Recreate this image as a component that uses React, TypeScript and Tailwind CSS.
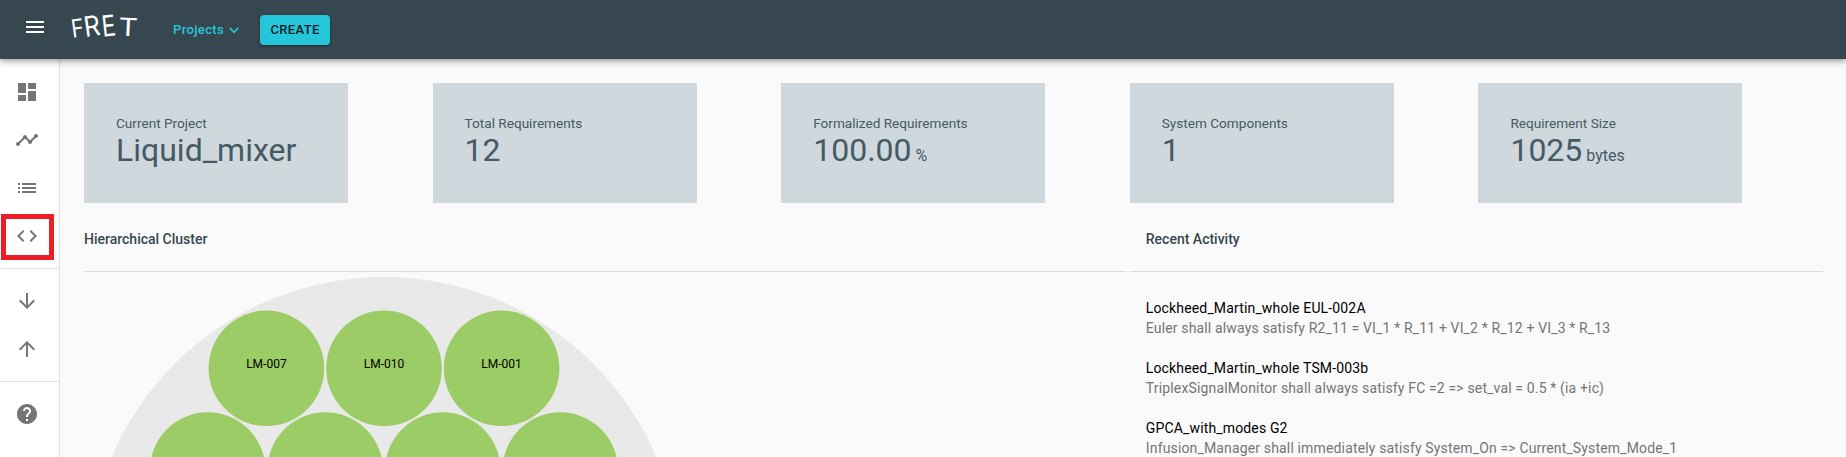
import type { ReactNode } from 'react';
import {
  MdCode,
  MdDashboard,
  MdHelp,
  MdList,
  MdMenu,
  MdOutlineArrowDownward,
  MdOutlineArrowUpward,
  MdTimeline,
} from 'react-icons/md';

const stats = [
  { label: 'Current Project', value: 'Liquid_mixer', unit: '' },
  { label: 'Total Requirements', value: '12', unit: '' },
  { label: 'Formalized Requirements', value: '100.00', unit: '%' },
  { label: 'System Components', value: '1', unit: '' },
  { label: 'Requirement Size', value: '1025', unit: 'bytes' },
];

const activity = [
  { title: 'Lockheed_Martin_whole EUL-002A', text: 'Euler shall always satisfy R2_11 = VI_1 * R_11 + VI_2 * R_12 + VI_3 * R_13' },
  { title: 'Lockheed_Martin_whole TSM-003b', text: 'TriplexSignalMonitor shall always satisfy FC =2 => set_val = 0.5 * (ia +ic)' },
  { title: 'GPCA_with_modes G2', text: 'Infusion_Manager shall immediately satisfy System_On => Current_System_Mode_1' },
];

const bubbles = [
  { x: 182.4, y: 96.3, label: 'LM-007' },
  { x: 300, y: 96.3, label: 'LM-010' },
  { x: 417.6, y: 96.3, label: 'LM-001' },
  { x: 123.7, y: 198.1, label: '' },
  { x: 241.2, y: 198.1, label: '' },
  { x: 358.8, y: 198.1, label: '' },
  { x: 476.3, y: 198.1, label: '' },
];

function NavItem({ children }: { children: ReactNode }) {
  return <a className="flex h-12 items-center pl-[15px] text-2xl text-[#757575]">{children}</a>;
}

function Logo() {
  return (
    <div className="mt-[13px] ml-[23px] flex h-[26px] w-[68px] font-['Inter',sans-serif] leading-[26px] text-white">
      <span className="mt-[2px] flex w-[14px] justify-center text-[25px]">
        <span className="inline-block scale-x-85 -rotate-8">F</span>
      </span>
      <span className="flex w-[17px] justify-center text-[28px]">
        <span className="inline-block scale-x-90 -rotate-8">R</span>
      </span>
      <span className="flex w-[16px] justify-center text-[29px]">
        <span className="inline-block scale-x-80 -rotate-6">E</span>
      </span>
      <span className="mt-px ml-px flex w-[20px] justify-center text-[25px]">
        <span className="inline-block scale-x-120 rotate-3">T</span>
      </span>
    </div>
  );
}

function Header() {
  return (
    <header className="relative z-10 flex h-[59px] shrink-0 items-start bg-[#37474f] shadow-[0_2px_4px_-1px_rgba(0,0,0,0.2),0_4px_5px_0_rgba(0,0,0,0.14),0_1px_10px_0_rgba(0,0,0,0.12)]">
      <MdMenu className="mt-[15px] ml-[23px] size-6 text-white" />
      <Logo />
      <button className="mt-[15px] ml-[35px] flex h-[30px] items-center text-[13px] font-medium tracking-[0.37px] text-[#26c6da]">
        Projects
        <svg viewBox="0 0 10 7" className="ml-[5px] h-[7px] w-[10px]" fill="none" stroke="currentColor" strokeWidth="1.6">
          <path d="M0.7 0.9 5 5.4 9.3 0.9" />
        </svg>
      </button>
      <button className="mt-[15px] ml-[21px] h-[30px] w-[70px] rounded-[4px] bg-[#26c6da] text-[13px] font-medium tracking-[0.37px] text-black/87 shadow-[0_1px_3px_rgba(0,0,0,0.4)]">
        CREATE
      </button>
    </header>
  );
}

function Sidebar() {
  return (
    <nav className="w-[60px] shrink-0 border-r border-[#e0e0e0] bg-white pt-px">
      <div className="py-2">
        <NavItem><MdDashboard /></NavItem>
        <NavItem><MdTimeline /></NavItem>
        <NavItem><MdList /></NavItem>
        <div className="relative">
          <NavItem><MdCode /></NavItem>
          <div className="absolute top-[2px] left-px h-[46px] w-[53px] border-5 border-[#ee1c25]" />
        </div>
      </div>
      <div className="border-y border-[#e0e0e0] py-2">
        <NavItem><MdOutlineArrowDownward /></NavItem>
        <NavItem><MdOutlineArrowUpward /></NavItem>
      </div>
      <div className="py-2">
        <NavItem><MdHelp /></NavItem>
      </div>
    </nav>
  );
}

function Cluster() {
  return (
    <svg viewBox="0 0 600 457" className="block h-[457px] w-[600px]">
      <circle cx="300" cy="301" r="296" fill="#e9e9e9" />
      {bubbles.map((b) => (
        <g key={b.x}>
          <circle cx={b.x} cy={b.y} r="57.8" fill="#9ccc65" />
          <text x={b.x} y={b.y} textAnchor="middle" className="text-[12px]">{b.label}</text>
        </g>
      ))}
    </svg>
  );
}

export default function App() {
  return (
    <div className="flex h-[457px] flex-col overflow-hidden bg-[#fafafa] font-['Roboto',sans-serif]">
      <Header />
      <div className="flex min-h-0 flex-1">
        <Sidebar />
        <main className="min-w-0 flex-1 overflow-hidden pt-6 pr-[19px] pl-6">
          <div className="grid grid-cols-5">
            {stats.map((s) => (
              <section key={s.label} className="h-[120px] w-[264px] bg-[#cfd8dd] px-8 pt-8 text-[#455a64]">
                <div className="text-[13.6px] leading-[17px]">{s.label}</div>
                <div className="text-[32px] leading-9">
                  {s.value}
                  {s.unit && <span className="text-base"> {s.unit}</span>}
                </div>
              </section>
            ))}
          </div>
          <div className="grid grid-cols-5">
            <section className="col-span-3 mr-1">
              <h2 className="flex h-[69px] items-center border-b border-[#dcdcdc] pt-1 text-sm font-medium text-[#37474f]">Hierarchical Cluster</h2>
              <Cluster />
            </section>
            <section className="col-span-2 mr-1">
              <h2 className="flex h-[69px] items-center border-b border-[#dcdcdc] pt-1 pl-4 text-sm font-medium text-[#37474f]">Recent Activity</h2>
              <ul className="pt-[26px] pl-4 text-sm leading-5 tracking-[0.15px]">
                {activity.map((a) => (
                  <li key={a.title} className="mb-5 whitespace-nowrap">
                    <div className="text-black">{a.title}</div>
                    <div className="text-[#757575]">{a.text}</div>
                  </li>
                ))}
              </ul>
            </section>
          </div>
        </main>
      </div>
    </div>
  );
}
